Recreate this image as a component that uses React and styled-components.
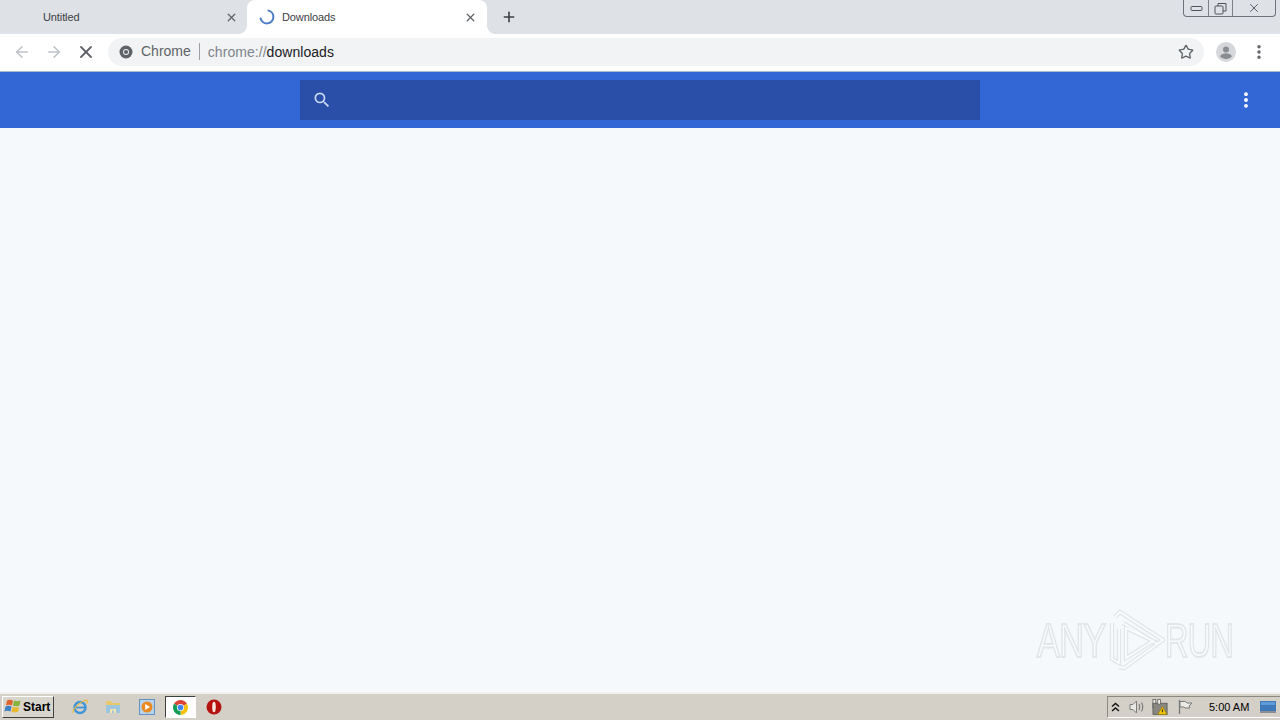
import styled, { createGlobalStyle } from 'styled-components';
import { ArrowLeft, ArrowRight, X, Plus, Star, EllipsisVertical } from 'lucide-react';

const GlobalStyle = createGlobalStyle`
  html, body { margin: 0; padding: 0; height: 100%; overflow: hidden; }
  #root { height: 100%; }
  * { box-sizing: border-box; }
`;

const Page = styled.div`
  display: flex;
  flex-direction: column;
  width: 1280px;
  height: 720px;
  font-family: "Liberation Sans", Arial, sans-serif;
  background: #f6f9fc;
  position: relative;
  overflow: hidden;
`;

const TabStrip = styled.div`
  display: flex;
  align-items: stretch;
  height: 34px;
  background: #dee1e6;
  position: relative;
`;

const Tab = styled.div`
  display: flex;
  align-items: center;
  position: relative;
  width: ${(p) => (p.$active ? '240px' : '247px')};
  padding: ${(p) => (p.$active ? '0 10px 0 12px' : '0 9px 0 43px')};
  background: ${(p) => (p.$active ? '#ffffff' : 'transparent')};
  border-radius: ${(p) => (p.$active ? '8px 8px 0 0' : '0')};
  font-size: 11px;
  letter-spacing: -0.1px;
  color: #3c4043;

  ${(p) =>
    p.$active &&
    `
    &::before, &::after {
      content: '';
      position: absolute;
      bottom: 0;
      width: 8px;
      height: 8px;
    }
    &::before {
      left: -8px;
      background: radial-gradient(circle at 0 0, transparent 7.5px, #ffffff 8px);
    }
    &::after {
      right: -8px;
      background: radial-gradient(circle at 100% 0, transparent 7.5px, #ffffff 8px);
    }
  `}
`;

const TabTitle = styled.span`
  flex: 1;
  padding-left: ${(p) => (p.$active ? '7px' : '0')};
`;

const NewTab = styled.div`
  display: flex;
  align-items: center;
  margin-left: 14px;
  color: #3c4043;
`;

const WindowButtons = styled.div`
  position: absolute;
  top: 0;
  right: 4px;
  display: flex;
  width: 93px;
  height: 17px;
  border: 1px solid #6f7379;
  border-top: 0;
  border-radius: 0 0 4px 4px;
`;

const WindowButton = styled.div`
  display: flex;
  align-items: center;
  justify-content: center;
  flex: ${(p) => (p.$grow ? '1' : 'none')};
  width: 24px;
  border-left: ${(p) => (p.$first ? '0' : '1px solid #7d8188')};
  color: #50545a;
`;

const Toolbar = styled.div`
  display: flex;
  align-items: center;
  height: 38px;
  background: #ffffff;
  border-bottom: 1px solid #a9bdd0;
  padding-bottom: 2px;
`;

const NavButton = styled.div`
  display: flex;
  align-items: center;
  justify-content: center;
  width: 32px;
  color: ${(p) => p.$color};
`;

const NavGroup = styled.div`
  display: flex;
  align-items: center;
  padding-left: 6px;
  width: 108px;
`;

const Omnibox = styled.div`
  display: flex;
  align-items: center;
  width: 1096px;
  height: 28px;
  padding: 0 10px 0 11px;
  background: #f1f3f4;
  border-radius: 14px;
  font-size: 14px;
`;

const Chip = styled.span`
  color: #5f6368;
  margin-left: 8px;
  padding-right: 8px;
  border-right: 1px solid #9aa0a6;
  line-height: 17px;
`;

const UrlScheme = styled.span`
  color: #80868b;
  margin-left: 8px;
  letter-spacing: 0.05px;
`;

const UrlPath = styled.span`
  color: #202124;
  flex: 1;
  letter-spacing: 0.05px;
`;

const Avatar = styled.div`
  margin-left: 12px;
  width: 20px;
  height: 20px;
  display: flex;
`;

const Menu = styled.div`
  display: flex;
  margin-left: 14px;
  color: #5f6368;
`;

const Header = styled.div`
  display: flex;
  align-items: center;
  justify-content: center;
  height: 56px;
  background: #3367d6;
  position: relative;
`;

const SearchBar = styled.div`
  display: flex;
  align-items: center;
  width: 680px;
  height: 40px;
  padding-left: 12px;
  background: #2a4fa8;
`;

const HeaderMenu = styled.div`
  position: absolute;
  right: 24px;
  top: 18px;
  display: flex;
  color: #ffffff;
`;

const Content = styled.div`
  flex: 1;
  background: #f6f9fc;
`;

const Watermark = styled.div`
  position: absolute;
  left: 1037px;
  top: 608px;
  display: flex;
  align-items: center;
  font-size: 49px;
  line-height: 64px;
  letter-spacing: -1px;
  color: #fafbfc;
  -webkit-text-stroke: 2px #e3e6e9;
  filter: blur(0.6px);
`;

const WatermarkWord = styled.span`
  display: inline-block;
  transform: scaleX(${(p) => p.$scale});
  transform-origin: left center;
  width: ${(p) => p.$w}px;
`;

const Taskbar = styled.div`
  display: flex;
  align-items: center;
  height: 28px;
  background: #d4d0c8;
  border-top: 2px solid #f2f1ee;
  position: relative;
`;

const StartButton = styled.div`
  display: flex;
  align-items: center;
  margin-left: 2px;
  width: 52px;
  height: 22px;
  padding-left: 1px;
  background: #d8d5cd;
  border: 1px solid;
  border-color: #ffffff #404040 #404040 #ffffff;
  font-size: 12px;
  font-weight: 700;
  color: #000000;
`;

const QuickLaunch = styled.div`
  display: flex;
  align-items: center;
  margin-left: 9px;
`;

const TaskIcon = styled.div`
  display: flex;
  align-items: center;
  justify-content: center;
  width: ${(p) => p.$w || 33}px;
  height: 24px;
`;

const ActiveTask = styled(TaskIcon)`
  width: 31px;
  height: 22px;
  background: #ffffff;
  border: 1px solid;
  border-color: #404040 #ffffff #ffffff #404040;
  margin: 0 1px;
`;

const Tray = styled.div`
  display: flex;
  align-items: center;
  height: 22px;
  margin-left: auto;
  padding-left: 1px;
  width: 173px;
  border: 1px solid;
  border-color: #8c897f #ffffff #ffffff #8c897f;
  border-right: 0;
`;

const TrayIcon = styled.div`
  display: flex;
  align-items: center;
  justify-content: center;
  width: ${(p) => p.$w}px;
`;

const Clock = styled.span`
  font-size: 11px;
  color: #000000;
  margin-left: 8px;
  width: 51px;
  white-space: nowrap;
`;

const Spinner = () => (
  <svg width="16" height="16" viewBox="0 0 16 16" fill="none">
    <path d="M9.5 1.6A6.5 6.5 0 1 1 1.6 9.5" stroke="#4b7cc9" strokeWidth="2" strokeLinecap="round" />
  </svg>
);

const ChromeFavicon = () => (
  <svg width="14" height="14" viewBox="0 0 14 14">
    <circle cx="7" cy="7" r="6.5" fill="#5f6368" />
    <circle cx="7" cy="7" r="3" fill="#f1f3f4" />
    <circle cx="7" cy="7" r="2.1" fill="#5f6368" />
  </svg>
);

const ProfileIcon = () => (
  <svg width="20" height="20" viewBox="0 0 20 20">
    <circle cx="10" cy="10" r="10" fill="#d5d7da" />
    <circle cx="10" cy="7.4" r="3" fill="#8a8d91" />
    <path d="M4 14.2c1.4-2.2 3.7-3 6-3s4.6.8 6 3c-1.4 1.7-3.6 2.8-6 2.8s-4.6-1.1-6-2.8z" fill="#8a8d91" />
  </svg>
);

const SearchIcon = () => (
  <svg width="20" height="20" viewBox="0 0 24 24" fill="#c9d8f6">
    <path d="M15.5 14h-.79l-.28-.27A6.47 6.47 0 0 0 16 9.5 6.5 6.5 0 1 0 9.5 16c1.61 0 3.09-.59 4.23-1.57l.27.28v.79l5 4.99L20.49 19l-4.99-5zm-6 0C7.01 14 5 11.99 5 9.5S7.01 5 9.5 5 14 7.01 14 9.5 11.99 14 9.5 14z" />
  </svg>
);

const WinLogo = () => (
  <svg width="19" height="18" viewBox="0 0 19 18">
    <path d="M3 2.5c2-1.2 4-1 6 0l-1 5c-2-1-4-1.100-6 0z" fill="#e0632c" />
    <path d="M10 2.600c2 1 4 1 6.500 0l-1 5c-2 1-4.500 1-6.500 0z" fill="#86b33c" />
    <path d="M1.500 8.500c2-1 4-1 6 0l-1 5c-2-1-4-1-6 0z" fill="#3f7fc4" />
    <path d="M8.500 8.700c2 1 4.500 1 6.500 0l-1 5c-2 1-4.500 1-6.500 0z" fill="#e8b92f" />
  </svg>
);

const IeIcon = () => (
  <svg width="18" height="18" viewBox="0 0 18 18" fill="none">
    <circle cx="9" cy="9.500" r="5.500" stroke="#3f95d8" strokeWidth="2.400" />
    <path d="M4 9.500h10" stroke="#3f95d8" strokeWidth="1.800" />
    <path d="M2 15c-1-3 6-11 13-13 2 0 1.500 2 .5 3.500" stroke="#e9b93b" strokeWidth="1.200" />
  </svg>
);

const FolderIcon = () => (
  <svg width="16" height="16" viewBox="0 0 16 16">
    <path d="M1 2h5l1 2h8v10H1z" fill="#e8c868" />
    <rect x="1" y="6" width="14" height="8" fill="#9cc7de" />
    <path d="M5 14v-4h6v4h-2v-2.500H7V14z" fill="#f4e6b0" />
  </svg>
);

const MediaIcon = () => (
  <svg width="16" height="16" viewBox="0 0 16 16">
    <rect x="0.500" y="0.500" width="15" height="15" fill="#b9d3ea" stroke="#5f93c4" />
    <circle cx="8" cy="8" r="5.500" fill="#ea8a20" />
    <path d="M6.200 5v6l4.800-3z" fill="#ffffff" />
  </svg>
);

const ChromeIcon = () => (
  <svg width="15" height="15" viewBox="0 0 16 16">
    <path d="M8 8L1.100 4A8 8 0 0 1 14.900 4z" fill="#db4437" />
    <path d="M8 8l6.900-4A8 8 0 0 1 8 16z" fill="#f4c20d" />
    <path d="M8 8v8A8 8 0 0 1 1.100 4z" fill="#0f9d58" />
    <circle cx="8" cy="8" r="3.800" fill="#ffffff" />
    <circle cx="8" cy="8" r="3" fill="#4285f4" />
  </svg>
);

const OperaIcon = () => (
  <svg width="16" height="16" viewBox="0 0 16 16">
    <circle cx="8" cy="8" r="7.500" fill="#b5120f" />
    <ellipse cx="8" cy="8" rx="1.800" ry="5.300" fill="#f7e6e0" />
  </svg>
);

const SpeakerIcon = () => (
  <svg width="18" height="16" viewBox="0 0 18 16" fill="none" stroke="#7b7d80">
    <path d="M2 5.500h3l3.500-3.500v12L5 10.500H2z" fill="#e8e7e3" />
    <path d="M11 5c1 2 1 4 0 6M13.500 3.500c1.600 3 1.600 6 0 9" strokeWidth="1.200" />
  </svg>
);

const NetworkWarnIcon = () => (
  <svg width="18" height="18" viewBox="0 0 18 18">
    <rect x="1" y="1" width="3" height="9" fill="#f1efe7" stroke="#555" strokeWidth="0.800" />
    <rect x="1" y="5" width="15" height="12" fill="#87877f" stroke="#555" strokeWidth="0.800" />
    <path d="M6 1h3v5H6z" fill="#f1efe7" stroke="#555" strokeWidth="0.800" />
    <path d="M11 8.500l5 8.500H6z" fill="#f1c40f" stroke="#8a6d00" strokeWidth="0.600" />
    <rect x="10.500" y="11.500" width="1" height="3" fill="#222" />
  </svg>
);

const FlagIcon = () => (
  <svg width="16" height="16" viewBox="0 0 16 16" fill="none" stroke="#77797c">
    <path d="M2.500 1v14" strokeWidth="1.300" />
    <path d="M3 2.500h5.500l1.500 1.500h5l-3 3 1 2H8l-1-1H3z" fill="#eceae4" />
  </svg>
);

const DesktopIcon = () => (
  <svg width="16" height="14" viewBox="0 0 16 14">
    <rect x="0" y="1" width="16" height="11" fill="#3f78b8" />
    <rect x="1" y="2" width="14" height="3" fill="#5f9bd8" />
    <rect x="0" y="11" width="16" height="2" fill="#8a8f94" />
  </svg>
);

const logoPath = 'M5 14v36l7 4V20M8 8l5-5 43 28-6 4L16 14M12 58l5 1 39-28M19 19l27 13-27 17z';

const WatermarkLogo = () => (
  <svg width="58" height="62" viewBox="0 0 58 62" fill="none">
    <path d={logoPath} stroke="#e3e6e9" strokeWidth="4.500" />
    <path d={logoPath} stroke="#fafbfc" strokeWidth="1.800" />
  </svg>
);

export default function App() {
  return (
    <Page>
      <GlobalStyle />
      <TabStrip>
        <Tab>
          <TabTitle>Untitled</TabTitle>
          <X size={13} strokeWidth={2.4} color="#5f6368" />
        </Tab>
        <Tab $active>
          <Spinner />
          <TabTitle $active>Downloads</TabTitle>
          <X size={13} strokeWidth={2.4} color="#5f6368" />
        </Tab>
        <NewTab>
          <Plus size={16} strokeWidth={2.4} />
        </NewTab>
        <WindowButtons>
          <WindowButton $first>
            <svg width="13" height="7" viewBox="0 0 13 7" fill="none" stroke="#50545a">
              <rect x="1" y="1.500" width="11" height="4" rx="1" />
            </svg>
          </WindowButton>
          <WindowButton>
            <svg width="13" height="13" viewBox="0 0 13 13" fill="none" stroke="#50545a">
              <rect x="1" y="4" width="8" height="8" rx="1" />
              <path d="M4 4V1.500h8V9H9" />
            </svg>
          </WindowButton>
          <WindowButton $grow>
            <X size={14} strokeWidth={1.6} />
          </WindowButton>
        </WindowButtons>
      </TabStrip>
      <Toolbar>
        <NavGroup>
          <NavButton $color="#bdc1c6"><ArrowLeft size={18} /></NavButton>
          <NavButton $color="#bdc1c6"><ArrowRight size={18} /></NavButton>
          <NavButton $color="#5f6368"><X size={20} strokeWidth={2.2} /></NavButton>
        </NavGroup>
        <Omnibox>
          <ChromeFavicon />
          <Chip>Chrome</Chip>
          <UrlScheme>chrome://</UrlScheme>
          <UrlPath>downloads</UrlPath>
          <Star size={16} strokeWidth={2} color="#5f6368" />
        </Omnibox>
        <Avatar><ProfileIcon /></Avatar>
        <Menu><EllipsisVertical size={18} strokeWidth={2.6} /></Menu>
      </Toolbar>
      <Header>
        <SearchBar>
          <SearchIcon />
        </SearchBar>
        <HeaderMenu><EllipsisVertical size={20} strokeWidth={2.6} /></HeaderMenu>
      </Header>
      <Content />
      <Watermark>
        <WatermarkWord $w={70} $scale={0.7}>ANY</WatermarkWord>
        <WatermarkLogo />
        <WatermarkWord $w={68} $scale={0.66}>RUN</WatermarkWord>
      </Watermark>
      <Taskbar>
        <StartButton><WinLogo />Start</StartButton>
        <QuickLaunch>
          <TaskIcon><IeIcon /></TaskIcon>
          <TaskIcon><FolderIcon /></TaskIcon>
          <TaskIcon $w={35}><MediaIcon /></TaskIcon>
          <ActiveTask><ChromeIcon /></ActiveTask>
          <TaskIcon><OperaIcon /></TaskIcon>
        </QuickLaunch>
        <Tray>
          <TrayIcon $w={13}>
            <svg width="9" height="10" viewBox="0 0 9 10" fill="none" stroke="#111" strokeWidth="1.400">
              <path d="M1 4.500l3.500-3 3.500 3M1 9l3.500-3L8 9" />
            </svg>
          </TrayIcon>
          <TrayIcon $w={30}><SpeakerIcon /></TrayIcon>
          <TrayIcon $w={17}><NetworkWarnIcon /></TrayIcon>
          <TrayIcon $w={32}><FlagIcon /></TrayIcon>
          <Clock>5:00 AM</Clock>
          <DesktopIcon />
        </Tray>
      </Taskbar>
    </Page>
  );
}
